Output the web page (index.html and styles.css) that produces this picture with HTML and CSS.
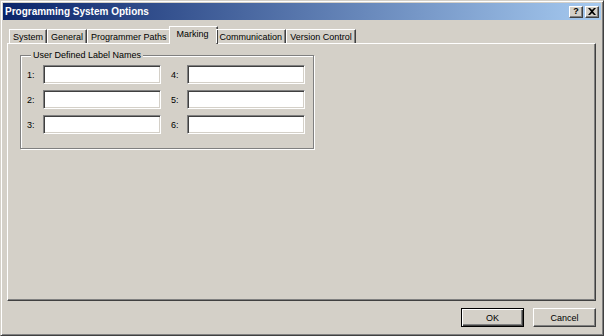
FILE: index.html
```html
<!DOCTYPE html>
<html lang="en">
<head>
    <meta charset="UTF-8">
    <title>Programming System Options</title>
    <link rel="stylesheet" href="styles.css">
</head>
<body>
    <div class="window">
        <div class="titlebar">
            <span class="title">Programming System Options</span>
            <div class="caption-buttons">
                <span class="caption-btn">?</span>
                <span class="caption-btn">
                    <svg width="8" height="7" viewBox="0 0 8 7"><path d="M0 0h2l2 2 2-2h2L5 3.5 8 7H6L4 5 2 7H0l3-3.5z" fill="#000"/></svg>
                </span>
            </div>
        </div>

        <div class="tabs">
            <div class="tab">System</div>
            <div class="tab">General</div>
            <div class="tab">Programmer Paths</div>
            <div class="tab active">Marking</div>
            <div class="tab">Communication</div>
            <div class="tab">Version Control</div>
        </div>

        <div class="panel">
            <fieldset class="group">
                <legend>User Defined Label Names</legend>
                <div class="fields">
                    <div class="field"><label>1:</label><input type="text"></div>
                    <div class="field"><label>4:</label><input type="text"></div>
                    <div class="field"><label>2:</label><input type="text"></div>
                    <div class="field"><label>5:</label><input type="text"></div>
                    <div class="field"><label>3:</label><input type="text"></div>
                    <div class="field"><label>6:</label><input type="text"></div>
                </div>
            </fieldset>
        </div>

        <div class="footer">
            <button class="default">OK</button>
            <button>Cancel</button>
        </div>
    </div>
</body>
</html>
```

FILE: styles.css
```css
body {
    margin: 0;
    padding: 0;
    font-family: "Liberation Sans", Arial, sans-serif;
    font-size: 9px;
    color: #000000;
    background-color: #d4d0c8;
}
.window {
    width: 604px;
    height: 336px;
    box-sizing: border-box;
    border: 1px solid;
    border-color: #d4d0c8 #404040 #404040 #d4d0c8;
    box-shadow: inset 1px 1px #ffffff, inset -1px -1px #808080;
    padding: 2px;
    display: flex;
    flex-direction: column;
}
.titlebar {
    height: 17px;
    display: flex;
    align-items: center;
    justify-content: space-between;
    background: linear-gradient(to right, #0a246a, #a6caf0);
}
.title {
    color: #ffffff;
    font-weight: bold;
    font-size: 10px;
    padding-left: 2px;
}
.caption-buttons {
    display: flex;
    gap: 2px;
    margin-right: 2px;
}
.caption-btn {
    width: 14px;
    height: 12px;
    box-sizing: border-box;
    display: flex;
    align-items: center;
    justify-content: center;
    background-color: #d4d0c8;
    border: 1px solid;
    border-color: #ffffff #404040 #404040 #ffffff;
    box-shadow: inset -1px -1px #808080;
    font-weight: bold;
    font-size: 9px;
    line-height: 1;
}
.tabs {
    display: flex;
    align-items: flex-end;
    height: 18px;
    margin-top: 5px;
    padding-left: 6px;
    position: relative;
    z-index: 1;
}
.tab {
    height: 14px;
    box-sizing: border-box;
    padding: 1px 3px 0 3px;
    line-height: 12px;
    border-top: 1px solid #ffffff;
    border-left: 1px solid #ffffff;
    border-right: 1px solid #404040;
    box-shadow: inset -1px 0 #808080;
    white-space: nowrap;
}
.tab.active {
    height: 18px;
    margin: 0 -2px -1px -2px;
    padding: 1px 8px 0 7px;
    background-color: #d4d0c8;
}
.panel {
    flex: 1;
    margin: 0 5px 0 4px;
    border: 1px solid;
    border-color: #ffffff #404040 #404040 #ffffff;
    box-shadow: inset -1px -1px #808080;
    padding: 6px 0 0 12px;
}
.group {
    width: 294px;
    box-sizing: border-box;
    margin: 0;
    padding: 4px 8px 14px 6px;
    border: 1px solid #808080;
    box-shadow: inset 1px 1px #ffffff, 1px 1px #ffffff;
}
.group legend {
    padding: 0 2px;
    margin-left: 4px;
    background-color: #d4d0c8;
    line-height: 11px;
}
.fields {
    display: grid;
    grid-template-columns: 134px 134px;
    column-gap: 10px;
    row-gap: 6px;
}
.field {
    display: flex;
    align-items: center;
}
.field label {
    width: 16px;
}
.field input {
    width: 118px;
    height: 19px;
    box-sizing: border-box;
    margin: 0;
    padding: 0 2px;
    background-color: #ffffff;
    border: 1px solid;
    border-color: #808080 #ffffff #ffffff #808080;
    box-shadow: inset 1px 1px #404040, inset -1px -1px #d4d0c8;
    outline: none;
    font-family: inherit;
    font-size: 9px;
}
.footer {
    display: flex;
    justify-content: flex-end;
    gap: 9px;
    padding: 7px 5px 6px 0;
}
button {
    width: 63px;
    height: 19px;
    padding: 0;
    background-color: #d4d0c8;
    color: #000000;
    font-family: inherit;
    font-size: 9px;
    border: 1px solid;
    border-color: #ffffff #404040 #404040 #ffffff;
    box-shadow: inset -1px -1px #808080;
}
button.default {
    border-color: #000000;
    box-shadow: inset 1px 1px #ffffff, inset -1px -1px #404040, inset -2px -2px #808080;
}
```
